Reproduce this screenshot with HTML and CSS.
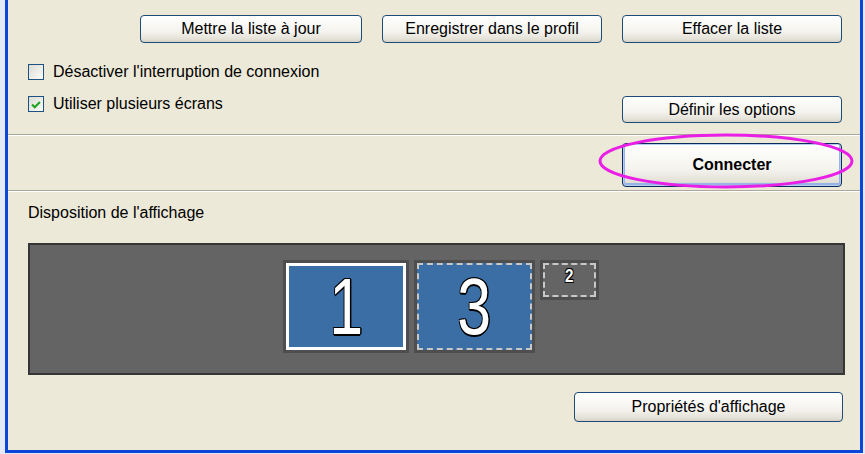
FILE: index.html
```html
<!doctype html>
<html lang="fr">
<head>
    <meta charset="UTF-8">
    <title>Connexion Bureau à distance</title>
    <link rel="stylesheet" href="styles.css">
</head>
<body>

<div id="app">
    <div class="frame">
        <!--barre des boutons de liste-->
        <div class="list-bar">
            <button class="btn btn-update">Mettre la liste à jour</button>
            <button class="btn btn-save">Enregistrer dans le profil</button>
            <button class="btn btn-clear">Effacer la liste</button>
        </div>

        <!--options-->
        <div class="opts">
            <div class="checks">
                <label class="check"><span class="box"></span>Désactiver l'interruption de connexion</label>
                <label class="check"><span class="box checked"><svg viewBox="0 0 16 16" width="16" height="16"><path d="M3.5 7.5 L6.5 10.5 L12.5 4.5" fill="none" stroke="#21a121" stroke-width="2.4"/></svg></span>Utiliser plusieurs écrans</label>
            </div>
            <button class="btn btn-options">Définir les options</button>
        </div>

        <div class="sep"></div>

        <div class="connect-bar">
            <button class="btn btn-default">Connecter</button>
            <svg class="ring" width="260" height="60" viewBox="0 0 260 60">
                <ellipse cx="129" cy="29" rx="126" ry="26" fill="none" stroke="#ea1fe6" stroke-width="3"/>
            </svg>
        </div>

        <div class="sep"></div>

        <div class="title">Disposition de l'affichage</div>

        <!--disposition des écrans-->
        <div class="layout">
            <div class="screen big primary"><div class="face"><span class="num">1</span></div></div>
            <div class="screen big"><div class="face dashed"><span class="num">3</span></div></div>
            <div class="screen small"><div class="face dashed"><span class="num-s">2</span></div></div>
        </div>

        <div class="bottom-bar">
            <button class="btn btn-props">Propriétés d'affichage</button>
        </div>
    </div>
</div>

</body>
</html>
```

FILE: styles.css
```css
* {
    margin: 0;
    padding: 0;
    box-sizing: border-box;
}

html, body {
    width: 100%;
    height: 100%;
    overflow: hidden;
    background: #e4e9f7;
    font-family: "Liberation Sans", Arial, sans-serif;
    font-size: 16px;
    color: #000;
}

.frame {
    margin-left: 5px;
    width: 858px;
    height: 453px;
    background: #ece9d8;
    border-left: 3px solid #0b46d6;
    border-right: 3px solid #0b46d6;
    border-bottom: 3px solid #0b46d6;
}

/* boutons style XP */
.btn {
    font-family: "Liberation Sans", Arial, sans-serif;
    font-size: 16px;
    color: #000;
    height: 28px;
    border: 1px solid #1f4b79;
    border-radius: 4px;
    background: linear-gradient(#ffffff, #f4f3ee 60%, #e3e0d6 90%, #d6d0c5);
}

.list-bar {
    display: flex;
    justify-content: flex-end;
    gap: 20px;
    padding: 15px 18px 0 0;
    height: 43px;
}

.btn-update {
    width: 222px;
}

.btn-save,
.btn-clear {
    width: 220px;
}

.opts {
    height: 91px;
    display: flex;
    justify-content: space-between;
    align-items: flex-start;
    padding: 19px 18px 0 20px;
}

.checks {
    display: flex;
    flex-direction: column;
    gap: 12px;
}

.check {
    display: flex;
    align-items: center;
    gap: 9px;
    height: 20px;
    line-height: 20px;
}

.check .box {
    width: 16px;
    height: 16px;
    border: 1px solid #1c5180;
    background: linear-gradient(135deg, #dcdcd6, #fafaf8);
    display: flex;
}

.btn-options {
    width: 220px;
    height: 27px;
    margin-top: 34px;
}

.sep {
    border-top: 1px solid #aca899;
    border-bottom: 1px solid #ffffff;
}

.connect-bar {
    height: 54px;
    display: flex;
    justify-content: flex-end;
    padding: 7px 18px 0 0;
    position: relative;
}

.btn-default {
    width: 220px;
    height: 44px;
    font-weight: bold;
    border: 1px solid #0a2c5c;
    box-shadow: inset 0 0 0 1px #b7cdf0, inset 0 -1px 0 2px #98b4e6;
}

.ring {
    position: absolute;
    left: 589px;
    top: -4px;
}

.title {
    padding: 11px 0 0 20px;
    line-height: 20px;
    height: 51px;
}

.layout {
    margin: 0 15px 0 20px;
    height: 132px;
    border: 2px solid #363636;
    background: #646464;
    display: flex;
    justify-content: center;
    align-items: flex-start;
    gap: 5px;
    padding: 15px 0 0 9px;
}

.screen {
    background: #4e4e4e;
    padding: 3px;
}

.screen.big {
    width: 121px;
    height: 93px;
}

.screen.big.primary {
    width: 126px;
}

.screen.small {
    width: 59px;
    height: 40px;
}

.face {
    width: 100%;
    height: 100%;
    background: #3a6ea5;
    display: flex;
    justify-content: center;
    align-items: center;
}

.primary .face {
    border: 3px solid #ffffff;
}

.face.dashed {
    border: 2px dashed #c8c8c8;
}

.small .face {
    background: #646464;
    align-items: flex-start;
}

.num {
    font-size: 80px;
    line-height: 80px;
    color: #fff;
    transform: scaleX(0.76);
    text-shadow: -1px -1px 0 #000, 1px -1px 0 #000, -1px 1px 0 #000, 1px 1px 0 #000, 0 2px 0 #000, 2px 0 0 #000;
}

.num-s {
    font-size: 19px;
    line-height: 22px;
    font-weight: bold;
    color: #fff;
    transform: scaleX(0.8);
    text-shadow: -1px -1px 0 #000, 1px -1px 0 #000, -1px 1px 0 #000, 1px 1px 0 #000;
}

.bottom-bar {
    display: flex;
    justify-content: flex-end;
    padding: 17px 17px 0 0;
}

.btn-props {
    width: 269px;
    height: 30px;
}
```
